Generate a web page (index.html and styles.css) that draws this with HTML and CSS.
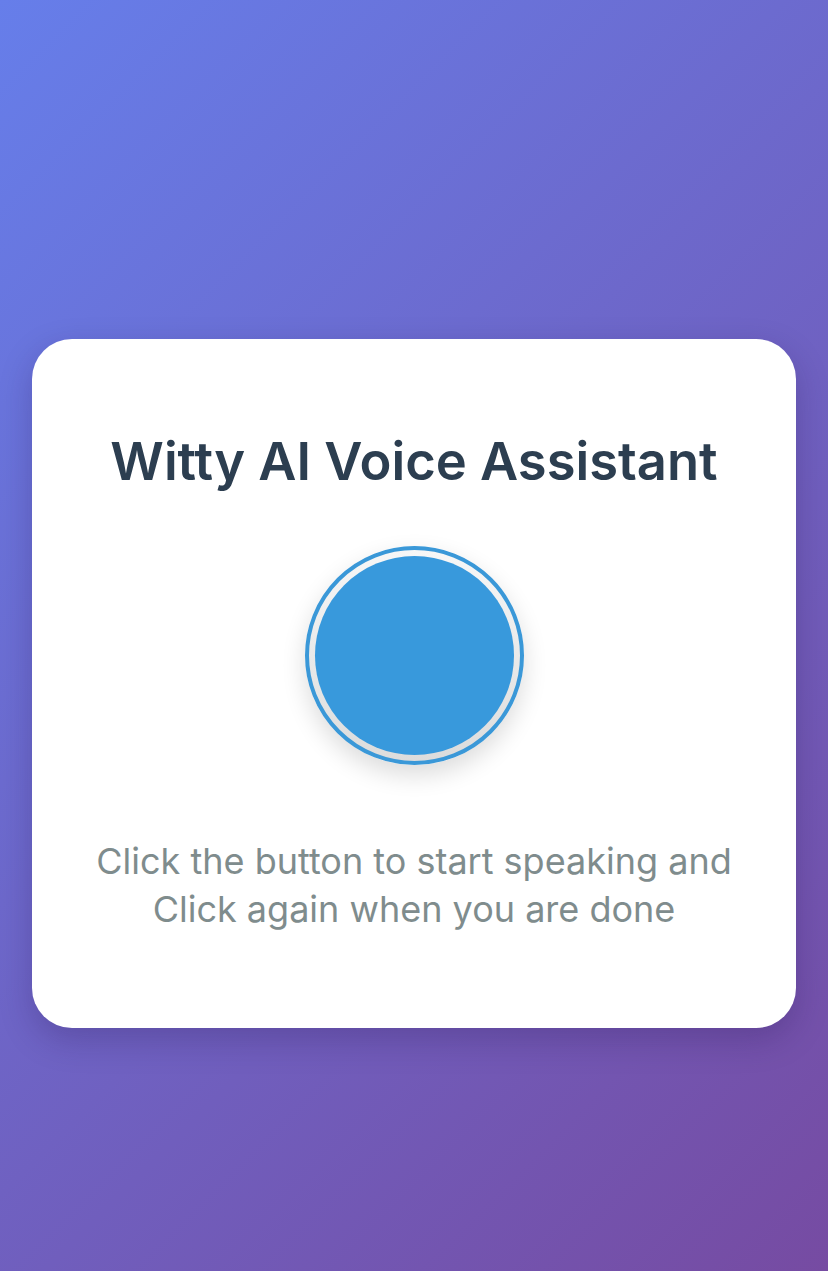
FILE: index.html
```html
<!DOCTYPE html>
<html lang="en">
<head>
<meta charset="utf-8">
<title>Witty AI Voice Assistant</title>
<link rel="stylesheet" href="styles.css">
</head>
<body>
  <main class="card">
    <h1 class="title">Witty AI Voice Assistant</h1>
    <button class="mic" type="button" aria-label="Start speaking"><span class="mic-core"></span></button>
    <p class="hint">Click the button to start speaking and<br>Click again when you are done</p>
  </main>
</body>
</html>
```

FILE: styles.css
```css
html, body {
  margin: 0;
  height: 100%;
}
body {
  box-sizing: border-box;
  min-height: 1271px;
  padding: 339px 32px 0;
  background: linear-gradient(135deg, #667eea 0%, #764ba2 100%);
  font-family: Inter, "Noto Sans", "Liberation Sans", sans-serif;
}
.card {
  box-sizing: border-box;
  height: 689px;
  background: #fff;
  border-radius: 40px;
  box-shadow: 0 12px 32px rgba(40, 20, 80, 0.25);
  padding: 91px 40px 0;
  display: flex;
  flex-direction: column;
  align-items: center;
}
.title {
  margin: 0;
  font-size: 52.5px;
  line-height: 62px;
  font-weight: 600;
  color: #2c3e50;
  text-align: center;
}
.mic {
  margin-top: 54px;
  box-sizing: border-box;
  width: 219px;
  height: 219px;
  border-radius: 50%;
  border: 4px solid #3a98d8;
  padding: 6px;
  background: linear-gradient(#f7f7f7, #dcdcdc);
  box-shadow: 0 10px 24px rgba(0, 0, 0, 0.14);
  display: flex;
  cursor: pointer;
}
.mic-core {
  flex: 1;
  border-radius: 50%;
  background: #3899dc;
}
.hint {
  margin: 72px 0 0;
  font-size: 36px;
  line-height: 48px;
  font-weight: 400;
  color: #7f8c8d;
  text-align: center;
}
```
